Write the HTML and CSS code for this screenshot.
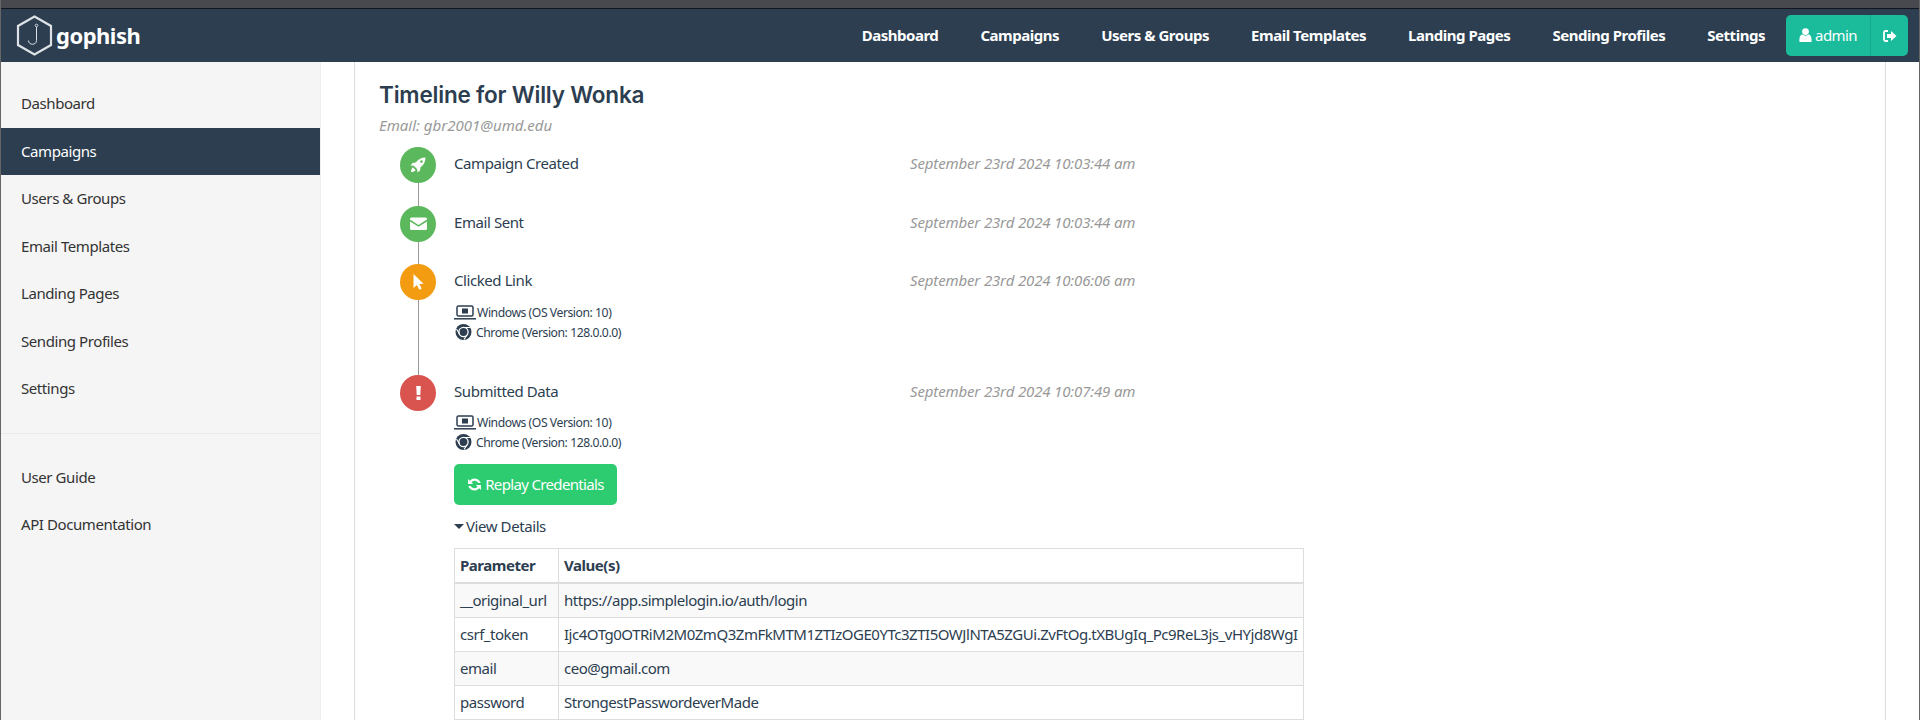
FILE: index.html
```html
<!DOCTYPE html>
<html lang="en">
<head>
    <meta charset="UTF-8">
    <title>Results - Gophish</title>
    <link rel="stylesheet" href="styles.css">
</head>
<body>
    <div class="titlebar"></div>
    <div class="navbar">
        <a class="brand">
            <svg class="brand-logo" width="37" height="41" viewBox="0 0 37 41">
                <path d="M18.5 1.5 L35 11 V30 L18.5 39.5 L2 30 V11 Z" fill="none" stroke="#dde2e6" stroke-width="2.2"/>
                <circle cx="20.5" cy="10.5" r="1.3" fill="none" stroke="#dde2e6" stroke-width="0.9"/>
                <path d="M20.5 12 V25.5 C20.5 30.5 12.5 30.5 12.5 25.5" fill="none" stroke="#dde2e6" stroke-width="1"/>
            </svg>
            <span class="brand-name">gophish</span>
        </a>
        <div class="nav-links">
            <a>Dashboard</a>
            <a>Campaigns</a>
            <a>Users &amp; Groups</a>
            <a>Email Templates</a>
            <a>Landing Pages</a>
            <a>Sending Profiles</a>
            <a>Settings</a>
        </div>
        <div class="user-group">
            <a class="user-btn">
                <svg width="13" height="14" viewBox="0 0 13 14"><circle cx="6.5" cy="3.6" r="3.4" fill="#fff"/><path d="M0.5 14 C0 9 1.5 6.5 3.6 6.5 C5 8 8 8 9.4 6.5 C11.500 6.5 13 9 12.500 14 Z" fill="#fff"/></svg>
                admin
            </a>
            <a class="logout-btn">
                <svg width="14" height="12" viewBox="0 0 14 12"><path d="M5 1 H2.500 Q1 1 1 2.500 V9.500 Q1 11 2.500 11 H5" fill="none" stroke="#fff" stroke-width="1.8"/><path d="M8 1 L13.500 6 L8 11 V8 H4 V4 H8 Z" fill="#fff"/></svg>
            </a>
        </div>
    </div>
    <div class="wrapper">
        <div class="sidebar">
            <ul class="side-list">
                <li>Dashboard</li>
                <li class="active">Campaigns</li>
                <li>Users &amp; Groups</li>
                <li>Email Templates</li>
                <li>Landing Pages</li>
                <li>Sending Profiles</li>
                <li>Settings</li>
            </ul>
            <ul class="side-list side-bottom">
                <li>User Guide</li>
                <li>API Documentation</li>
            </ul>
        </div>
        <div class="main">
            <div class="panel">
                <h2 class="tl-name">Timeline for Willy Wonka</h2>
                <div class="tl-email">Email: gbr2001@umd.edu</div>
                <div class="timeline">
                    <div class="tl-entry">
                        <div class="tl-icon green">
                            <svg width="16" height="16" viewBox="0 0 16 16"><path d="M15.500 0.500 C11 0.500 8 2.500 5.800 5.500 L2.500 6 L0.500 8.500 L3.800 8.800 L7.200 12.200 L7.500 15.500 L10 13.500 L10.500 10.200 C13.500 8 15.500 5 15.500 0.500 Z M11.500 3.200 A1.300 1.300 0 1 1 11.490 3.200 Z M2.800 10.300 L5.700 13.200 C4.500 14.500 2 15 1 15 C1 14 1.500 11.500 2.800 10.300 Z" fill="#fff" fill-rule="evenodd"/></svg>
                        </div>
                        <div class="tl-body">
                            <div class="tl-head"><span class="tl-title">Campaign Created</span><span class="tl-date">September 23rd 2024 10:03:44 am</span></div>
                        </div>
                    </div>
                    <div class="tl-entry">
                        <div class="tl-icon green">
                            <svg width="17" height="13" viewBox="0 0 17 13"><path d="M0 2 Q0 0.500 1.500 0.500 H15.500 Q17 0.500 17 2 V2.600 L8.500 8 L0 2.600 Z" fill="#fff"/><path d="M0 4.400 L8.500 9.800 L17 4.400 V11.500 Q17 13 15.500 13 H1.500 Q0 13 0 11.500 Z" fill="#fff"/></svg>
                        </div>
                        <div class="tl-body">
                            <div class="tl-head"><span class="tl-title">Email Sent</span><span class="tl-date">September 23rd 2024 10:03:44 am</span></div>
                        </div>
                    </div>
                    <div class="tl-entry">
                        <div class="tl-icon orange">
                            <svg width="11" height="16" viewBox="0 0 11 16"><path d="M0.500 0 L10.500 9.800 L6.300 10 L8.700 14.500 L6.300 15.800 L4 11 L0.500 14 Z" fill="#fff"/></svg>
                        </div>
                        <div class="tl-body">
                            <div class="tl-head"><span class="tl-title">Clicked Link</span><span class="tl-date">September 23rd 2024 10:06:06 am</span></div>
                            <div class="tl-devices">
                                <div class="device">
                                    <svg class="laptop" width="22" height="15" viewBox="0 0 22 15"><rect x="3" y="1" width="16" height="10" rx="1.500" fill="none" stroke="#2c3e50" stroke-width="1.500"/><path d="M0 13.800 H22" stroke="#2c3e50" stroke-width="1.500"/><rect x="8" y="3.500" width="6" height="5" fill="#2c3e50"/></svg>
                                    Windows (OS Version: 10)
                                </div>
                                <div class="device">
                                    <svg class="chrome" width="21" height="16" viewBox="1 0 21 16"><circle cx="10.500" cy="8" r="8" fill="#2c3e50"/><circle cx="10.500" cy="8" r="4.600" fill="none" stroke="#fff" stroke-width="1.300"/><path d="M10.500 3.500 H17 M6.500 10 L3.500 5 M14.300 10.500 L11 15.500" stroke="#fff" stroke-width="1.100"/></svg>
                                    Chrome (Version: 128.0.0.0)
                                </div>
                            </div>
                        </div>
                    </div>
                    <div class="tl-entry last">
                        <div class="tl-icon red">
                            <svg width="5" height="14" viewBox="0 0 5 14"><path d="M0.200 0 H4.800 L4.300 9 H0.700 Z" fill="#fff"/><rect x="0.500" y="10.500" width="4" height="3.500" fill="#fff"/></svg>
                        </div>
                        <div class="tl-body">
                            <div class="tl-head"><span class="tl-title">Submitted Data</span><span class="tl-date">September 23rd 2024 10:07:49 am</span></div>
                            <div class="tl-devices">
                                <div class="device">
                                    <svg class="laptop" width="22" height="15" viewBox="0 0 22 15"><rect x="3" y="1" width="16" height="10" rx="1.500" fill="none" stroke="#2c3e50" stroke-width="1.500"/><path d="M0 13.800 H22" stroke="#2c3e50" stroke-width="1.500"/><rect x="8" y="3.500" width="6" height="5" fill="#2c3e50"/></svg>
                                    Windows (OS Version: 10)
                                </div>
                                <div class="device">
                                    <svg class="chrome" width="21" height="16" viewBox="1 0 21 16"><circle cx="10.500" cy="8" r="8" fill="#2c3e50"/><circle cx="10.500" cy="8" r="4.600" fill="none" stroke="#fff" stroke-width="1.300"/><path d="M10.500 3.500 H17 M6.500 10 L3.500 5 M14.300 10.500 L11 15.500" stroke="#fff" stroke-width="1.100"/></svg>
                                    Chrome (Version: 128.0.0.0)
                                </div>
                            </div>
                            <button class="replay-btn">
                                <svg width="15" height="15" viewBox="0 0 14 14"><path d="M12.800 5.600 A6 6 0 0 0 2.600 3.400 L1 1.800 V6.500 H5.700 L4.200 5 A3.800 3.800 0 0 1 10.500 5.600 Z M1.200 8.400 A6 6 0 0 0 11.400 10.600 L13 12.200 V7.500 H8.300 L9.800 9 A3.800 3.800 0 0 1 3.500 8.400 Z" fill="#fff"/></svg>
                                <span class="replay-label">Replay Credentials</span>
                            </button>
                            <div class="details-toggle"><span class="caret"></span>View Details</div>
                            <table class="details">
                                <tr><th class="col-param">Parameter</th><th>Value(s)</th></tr>
                                <tr class="odd"><td>__original_url</td><td>https://app.simplelogin.io/auth/login</td></tr>
                                <tr><td>csrf_token</td><td>Ijc4OTg0OTRiM2M0ZmQ3ZmFkMTM1ZTIzOGE0YTc3ZTI5OWJlNTA5ZGUi.ZvFtOg.tXBUgIq_Pc9ReL3js_vHYjd8WgI</td></tr>
                                <tr class="odd"><td>email</td><td>ceo@gmail.com</td></tr>
                                <tr><td>password</td><td>StrongestPasswordeverMade</td></tr>
                            </table>
                        </div>
                    </div>
                </div>
            </div>
        </div>
    </div>
</body>
</html>
```
FILE: styles.css
```css
html, body {
    margin: 0;
    height: 720px;
    overflow: hidden;
}
body {
    font-family: "Noto Sans", sans-serif;
    font-size: 15px;
    letter-spacing: -0.42px;
    color: #2c3e50;
    background: #fff;
    border-left: 1px solid #666;
    border-right: 1px solid #666;
}
.titlebar {
    height: 8px;
    margin-left: -1px;
    margin-right: -1px;
    background: #48494e;
    border-bottom: 1px solid #10161c;
}
.navbar {
    height: 53px;
    background: #2c3e50;
    display: flex;
    align-items: center;
    color: #fff;
}
.brand {
    display: flex;
    align-items: center;
    padding-left: 15px;
    gap: 3px;
    font-size: 22px;
    font-weight: 700;
    letter-spacing: -0.5px;
}
.brand-name {
    padding-bottom: 2px;
}
.nav-links {
    margin-left: auto;
    display: flex;
    gap: 42px;
    padding-bottom: 2px;
    font-weight: 700;
    font-size: 15px;
    letter-spacing: -0.47px;
}
.user-group {
    display: flex;
    height: 41px;
    margin-left: 21px;
    margin-right: 11px;
}
.user-btn, .logout-btn {
    display: flex;
    align-items: center;
    background: #1abc9c;
    font-size: 15px;
}
.user-btn {
    width: 85px;
    justify-content: center;
    gap: 3px;
    padding-bottom: 1px;
    box-sizing: border-box;
    letter-spacing: -0.6px;
    border-radius: 5px 0 0 5px;
    border-right: 1px solid #18a88c;
}
.logout-btn {
    width: 37px;
    justify-content: center;
    border-radius: 0 5px 5px 0;
}
.wrapper {
    display: flex;
    height: 658px;
}
.sidebar {
    width: 319px;
    flex: none;
    background: #f5f5f5;
    border-right: 1px solid #eee;
    padding-top: 18px;
    color: #333;
}
.side-list {
    list-style: none;
    margin: 0;
    padding: 0 0 20px;
}
.side-list li {
    height: 47.5px;
    line-height: 47px;
    padding-left: 20px;
}
.side-list li.active {
    background: #2c3e50;
    color: #fff;
}
.side-bottom {
    border-top: 1px solid #eaeaea;
    padding-top: 20px;
}
.main {
    flex: 1;
    padding: 0 33px 0 33px;
}
.panel {
    height: 100%;
    border-left: 1px solid #ddd;
    border-right: 1px solid #ddd;
    padding: 18px 24px 0;
}
.tl-name {
    margin: 0;
    font-family: Inter, sans-serif;
    font-size: 22.5px;
    line-height: 30px;
    font-weight: 600;
    letter-spacing: -0.2px;
}
.tl-email {
    margin-top: 5px;
    line-height: 20px;
    font-style: italic;
    letter-spacing: 0;
    color: #999;
}
.timeline {
    margin-top: 12px;
}
.tl-entry {
    position: relative;
    display: flex;
    padding-left: 21px;
    padding-bottom: 22.5px;
}
.tl-entry::before {
    content: "";
    position: absolute;
    left: 38.5px;
    top: 0;
    bottom: 0;
    width: 1px;
    background: #999;
}
.tl-entry.last::before {
    display: none;
}
.tl-icon {
    position: relative;
    width: 36px;
    height: 36px;
    flex: none;
    border-radius: 50%;
    display: flex;
    align-items: center;
    justify-content: center;
    margin-right: 18px;
}
.green { background: #5cb85c; }
.orange { background: #f39c12; }
.red { background: #d9534f; }
.tl-body {
    flex: 1;
    padding-top: 6px;
}
.tl-head {
    display: flex;
    line-height: 20px;
}
.tl-title {
    width: 456px;
}
.tl-date {
    font-style: italic;
    letter-spacing: -0.15px;
    color: #999;
}
.tl-devices {
    margin-top: 12px;
    margin-bottom: 10.5px;
    font-size: 12.2px;
    letter-spacing: -0.45px;
}
.last .tl-devices {
    margin-top: 11px;
    margin-bottom: 0;
}
.device {
    display: flex;
    align-items: center;
    height: 20px;
    gap: 1px;
}
.replay-btn {
    display: flex;
    align-items: center;
    justify-content: center;
    gap: 3px;
    margin-top: 12px;
    width: 163px;
    height: 41px;
    padding: 0;
    border: none;
    border-radius: 5px;
    background: #2ecc71;
    color: #fff;
    font: inherit;
    letter-spacing: -0.65px;
}
.replay-label {
    padding-bottom: 2px;
}
.details-toggle {
    margin-top: 11px;
    line-height: 20px;
    display: flex;
    align-items: center;
}
.caret {
    width: 0;
    height: 0;
    border-left: 5px solid transparent;
    border-right: 5px solid transparent;
    border-top: 5px solid #2c3e50;
    margin-right: 2px;
}
.details {
    margin-top: 12px;
    width: 850px;
    table-layout: fixed;
    border-collapse: collapse;
    letter-spacing: -0.47px;
}
.details th, .details td {
    border: 1px solid #ddd;
    padding: 0 5px 2px;
    height: 31px;
    text-align: left;
    white-space: nowrap;
    overflow: hidden;
}
.details th {
    border-bottom-width: 2px;
    font-weight: 700;
}
.col-param {
    width: 93px;
}
.odd td {
    background: #f9f9f9;
}
```
